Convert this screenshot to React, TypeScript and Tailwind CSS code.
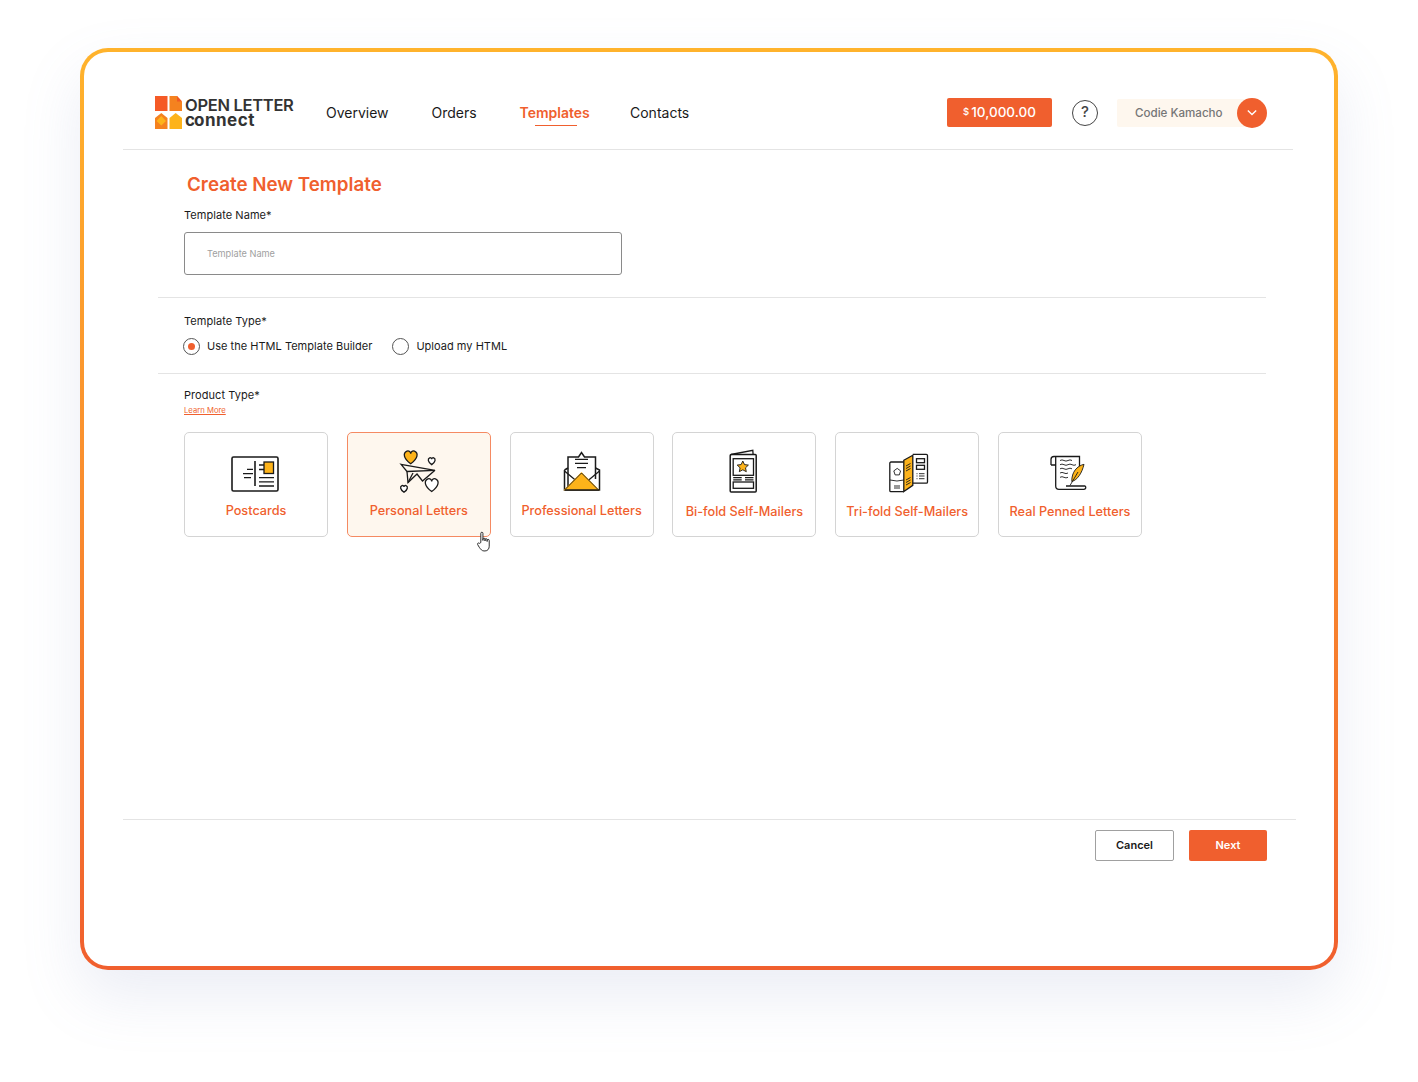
const font = { fontFamily: "Inter, sans-serif" };

function Heart({ x, y, s, fill = "#fff" }: { x: number; y: number; s: number; fill?: string }) {
  return (
    <path
      transform={`translate(${x} ${y}) scale(${s})`}
      d="M0 .9C-1 .2-1.05-.55-.5-.78-.22-.88 0-.65 0-.42 0-.65.22-.88.5-.78 1.05-.55 1 .2 0 .9Z"
      fill={fill}
      stroke="#1a1a1a"
      strokeWidth={1.3}
      vectorEffect="non-scaling-stroke"
    />
  );
}

function IconBox({ children }: { children: React.ReactNode }) {
  return (
    <svg viewBox="0 0 60 56" className="h-[56px] w-[60px]" fill="none" stroke="#1a1a1a" strokeWidth={1.3}>
      {children}
    </svg>
  );
}

function PostcardIcon() {
  return (
    <IconBox>
      <rect x="6" y="12" width="46" height="34" rx="1.5" strokeWidth={1.6} />
      <path d="M29 16v25" strokeWidth={1.6} />
      <rect x="38" y="17" width="9.5" height="11.5" fill="#FDB31A" />
      <path d="M33 20h5M33 24.500h5M33 32.700h15M33 36.800h15M33 41h15" />
      <path d="M21 24.300h6M17 28.700h10M18 32.700h7" />
    </IconBox>
  );
}

function PlaneIcon() {
  return (
    <IconBox>
      <Heart x={21.700} y={12} s={7.500} fill="#FDB31A" />
      <Heart x={42.700} y={16} s={4} />
      <Heart x={15} y={43.700} s={4} />
      <Heart x={42.700} y={39.700} s={7.500} />
      <path d="M12 19.300 46 25.300 18 26.500Z" />
      <path d="M18 26.500 19 37.500 28 29 33.500 36 46 25.300" />
      <path d="M19 37.500 24 28" />
    </IconBox>
  );
}

function EnvelopeIcon() {
  return (
    <IconBox>
      <path d="M16 44V12h10.500l3-4.500 3 4.500H43.500v22" fill="#fff" strokeWidth={1.5} />
      <path d="M23 14.300h13M23 18.300h13M25 22.700h9" />
      <path d="M12.500 25v20h35V25l-4-2M12.500 25l3.500-2" strokeWidth={1.5} />
      <path d="M12.500 26l12 10M47.500 26l-12 10" />
      <path d="M29.500 28 46 44.500H13Z" fill="#FDB31A" stroke="#FDB31A" />
      <path d="M13 45h34" strokeWidth={1.6} />
      <path d="M29.500 28 13 44.500M29.500 28 46 44.500" strokeWidth={0.9} />
    </IconBox>
  );
}

function BifoldIcon() {
  return (
    <IconBox>
      <path d="M17 9.500 38.800 5.300l.3 4.200" />
      <rect x="16.200" y="9.500" width="26" height="37.500" rx="1" strokeWidth={1.5} />
      <rect x="19.200" y="13.700" width="20.300" height="16.600" strokeWidth={1.3} />
      <path
        d="M28.800 16l1.700 3.600 3.900.5-2.900 2.700.8 3.900-3.500-1.900-3.500 1.900.8-3.900-2.900-2.700 3.900-.5Z"
        fill="#FDB31A"
        strokeWidth={0.9}
      />
      <path d="M19.200 32.700h8.500M31 32.700h8.500M19.200 34.900h8.500M31 34.900h8.500" />
      <rect x="19.200" y="37" width="20.300" height="6.300" />
    </IconBox>
  );
}

function TrifoldIcon() {
  return (
    <IconBox>
      <path d="M26.800 17H14a1.200 1.200 0 0 0-1.200 1.200v27.300a1.200 1.200 0 0 0 1.200 1.200h12.800" />
      <path d="M26.800 15.300 35.800 10.300V40.300L26.800 46.500Z" fill="#FDB31A" />
      <path d="M35.800 9.300H49.300a1.200 1.200 0 0 1 1.200 1.200V37a1.200 1.200 0 0 1-1.200 1.200H35.800" />
      <path d="M29 21l4.500-2.500M29 23.500l4.500-2.500M29 26l4.500-2.500M29 35l4.500-2.500M29 37.500l4.500-2.500M29 40l4.500-2.500" strokeWidth={0.9} />
      <rect x="39.500" y="13.700" width="8" height="4" />
      <rect x="39.500" y="20.300" width="8" height="4" />
      <path d="M39.500 28.700h1M42 28.700h5.500M39.500 31h1M42 31h5.500M39.500 33.700h1M42 33.700h5.500" strokeWidth={0.9} />
      <path d="M20.200 23.400l3.400 2.500-1.300 4h-4.200l-1.300-4Z" strokeWidth={0.9} />
      <path d="M13 35q7 2 13.800 0M17 41h6M17 43h6" strokeWidth={0.9} />
    </IconBox>
  );
}

function PennedIcon() {
  return (
    <IconBox>
      <path d="M11 20v-5.500a3 3 0 0 1 3-3H39.500V24" />
      <path d="M11 20h4.700M15.700 12V41q0 3.300 3.300 3.300h25a1.800 1.800 0 0 0 1-3.300H26" />
      <path
        d="M20 15.500q2-1.200 4 0t4 0 4 0M20 19.700q2-1.200 4 0t4 0 4 0 4 0M20 23.800q2-1.200 4 0t4 0 4 0M20 28q2-1.200 4 0t4 0M20 32.300q2-1.200 4 0t4 0"
        strokeWidth={0.9}
      />
      <path d="M44 19.300C37 21 31.500 27 31.800 36.500 37.500 35 42 28 44 19.300Z" fill="#FDB31A" strokeWidth={0.9} />
      <path d="M30 40.500 38 27" strokeWidth={0.9} />
    </IconBox>
  );
}

const products = [
  { name: "Postcards", icon: <PostcardIcon />, gap: "mt-[2px]" },
  { name: "Personal Letters", icon: <PlaneIcon />, gap: "mt-[2px]", active: true },
  { name: "Professional Letters", icon: <EnvelopeIcon />, gap: "mt-[2px]" },
  { name: "Bi-fold Self-Mailers", icon: <BifoldIcon />, gap: "mt-[3px]" },
  { name: "Tri-fold Self-Mailers", icon: <TrifoldIcon />, gap: "mt-[3px]" },
  { name: "Real Penned Letters", icon: <PennedIcon />, gap: "mt-[3px]" },
];

function Logo() {
  return (
    <div className="flex items-center">
      <svg viewBox="0 0 27 33" className="h-[33px] w-[27px]">
        <rect x="0" y="0" width="12.500" height="15" fill="#F55A26" />
        <path d="M14.500 0H22L27 5.500V15H14.500Z" fill="#F5821F" />
        <path d="M22 0 27 5.500H22Z" fill="#F15A24" />
        <path d="M0 22 6.300 17 12.500 22V33H0Z" fill="#F5821F" />
        <path d="M6.300 20 11 25 6.300 29.500 1.500 25Z" fill="#FDB31A" />
        <path d="M14.500 22 20.700 17 27 22V33H14.500Z" fill="#FDB31A" />
      </svg>
      <div className="ml-[3px] flex w-[110px] flex-col text-[#333333]">
        <span className="text-[16.500px] leading-[15px] font-semibold tracking-[-0.3px] whitespace-nowrap">OPEN LETTER</span>
        <span className="text-[17px] leading-[14px] font-bold tracking-[0.5px]">
          <span className="tracking-[-1px]">c</span>onnect
        </span>
      </div>
    </div>
  );
}

export default function App() {
  return (
    <div className="h-[1082px] w-[1418px] overflow-hidden bg-white pt-[48px] pl-[80px] text-[#1a1a1a]" style={font}>
      <div className="h-[922px] w-[1258px] rounded-[28px] bg-gradient-to-b from-[#FFB32C] to-[#F05F2E] p-1 shadow-[0_26px_60px_rgba(120,135,185,0.15)]">
        <div className="relative flex h-full w-full flex-col rounded-[24px] bg-white">
          {/* top bar */}
          <header className="mr-[41px] ml-[39px] flex h-[98px] items-center border-b border-[#e4e4e4] pt-[24px] pl-[32px]">
            <Logo />
            <nav className="ml-[31px] flex items-center text-sm">
              <a className="w-[105.500px]">Overview</a>
              <a className="w-[88px]">Orders</a>
              <a className="relative w-[110.500px] font-semibold text-[#F05F2E]">
                Templates
                <span className="absolute top-[22px] left-[15px] h-px w-[42px] bg-[#F05F2E]" />
              </a>
              <a>Contacts</a>
            </nav>
            <div className="mr-[26px] ml-auto flex items-center">
              <div className="flex h-[29px] w-[105px] items-center justify-center rounded-[2px] bg-[#F05F2E] font-medium text-white">
                <span className="mr-[2px] text-[9.500px]">$</span>
                <span className="text-[13.500px]">10,000.00</span>
              </div>
              <div className="ml-[20px] flex h-[26px] w-[26px] items-center justify-center rounded-full border-[1.500px] border-[#444444] text-[15px] font-medium text-[#444444]">
                ?
              </div>
              <div className="ml-[19px] flex h-[28px] w-[133px] items-center rounded-[2px] bg-[#FEF7EE] pt-[2px] pl-[18px] text-[11.600px] font-medium whitespace-nowrap text-[#767676]">
                Codie Kamacho
              </div>
              <div className="z-10 ml-[-13px] flex h-[30px] w-[30px] items-center justify-center rounded-full bg-[#F05F2E]">
                <svg viewBox="0 0 12 8" className="h-[7px] w-[10px]" fill="none" stroke="#fff" strokeWidth={1.600}>
                  <path d="M1 1.500 6 6.500 11 1.500" />
                </svg>
              </div>
            </div>
          </header>

          <main className="mr-[68px] ml-[74px] flex flex-1 flex-col">
            <div className="border-b border-[#e4e4e4] px-[26px] pb-[22px]">
              <h1 className="mt-[21px] ml-[3px] text-[18.800px] leading-[28px] font-semibold text-[#F05F2E]">Create New Template</h1>
              <label className="mt-[8px] block text-[11px] leading-[16px] tracking-[0.05px]">Template Name*</label>
              <div className="mt-[9px] flex h-[43px] w-[438px] items-center rounded-[3px] border border-[#8a8a8a] pl-[22px] text-[9.200px] text-[#a0a0a0]">
                Template Name
              </div>
            </div>

            <div className="h-[76px] border-b border-[#e4e4e4] px-[26px] pt-[15px]">
              <div className="text-[11px] leading-[16px] tracking-[0.05px]">Template Type*</div>
              <div className="mt-[9px] ml-[-1px] flex items-center text-[11px] tracking-[0.02px]">
                <span className="flex h-[17px] w-[17px] items-center justify-center rounded-full border border-[#555555]">
                  <span className="h-[7px] w-[7px] rounded-full bg-[#F05F2E]" />
                </span>
                <span className="ml-[7px]">Use the HTML Template Builder</span>
                <span className="ml-[20px] h-[17px] w-[17px] rounded-full border border-[#555555]" />
                <span className="ml-[7px]">Upload my HTML</span>
              </div>
            </div>

            <div className="px-[26px] pt-[13px]">
              <div className="text-[11px] leading-[16px] tracking-[0.05px]">Product Type*</div>
              <a className="mt-[3px] block text-[7.700px] leading-[10px] text-[#F05F2E] underline">Learn More</a>
              <div className="mt-[16px] flex gap-[18.800px]">
                {products.map((p) => (
                  <div
                    key={p.name}
                    className={
                      p.active
                        ? "flex h-[105px] w-[144px] flex-col items-center rounded-[5px] border border-[#F58A62] bg-[#FEF7EE] pt-[12px]"
                        : "flex h-[105px] w-[144px] flex-col items-center rounded-[5px] border border-[#d4d4d4] pt-[12px]"
                    }
                  >
                    {p.icon}
                    <span className={`${p.gap} text-[12.700px] leading-[16px] font-medium whitespace-nowrap text-[#F05F2E]`}>{p.name}</span>
                  </div>
                ))}
              </div>
            </div>
          </main>

          <footer className="mr-[38px] ml-[39px] mb-[105px] flex h-[42px] items-end justify-end border-t border-[#e4e4e4] pr-[29px]">
            <button className="h-[31px] w-[79px] rounded-[2px] border border-[#a0a0a0] text-[11px] font-semibold">Cancel</button>
            <button className="ml-[15px] h-[31px] w-[78px] rounded-[2px] bg-[#F05F2E] text-[11px] font-semibold text-white">Next</button>
          </footer>

          {/* hand cursor over the selected card */}
          <svg viewBox="0 0 16 20" className="absolute top-[479px] left-[392px] h-[21px] w-[17px]" fill="#fff" stroke="#222" strokeWidth={0.9}>
            <path d="M4.500 11V2.200a1 1 0 0 1 2 0V9V7.800a1 1 0 0 1 2 0V9.500V8.300a1 1 0 0 1 2 0V10V9a1 1 0 0 1 2 0v5.500c0 2.500-1.500 4.500-4 4.500H7.500C5.500 19 4.500 17.500 3 15.500L1.500 13c-.7-1.200.8-2.200 1.700-1.200Z" />
          </svg>
        </div>
      </div>
    </div>
  );
}
